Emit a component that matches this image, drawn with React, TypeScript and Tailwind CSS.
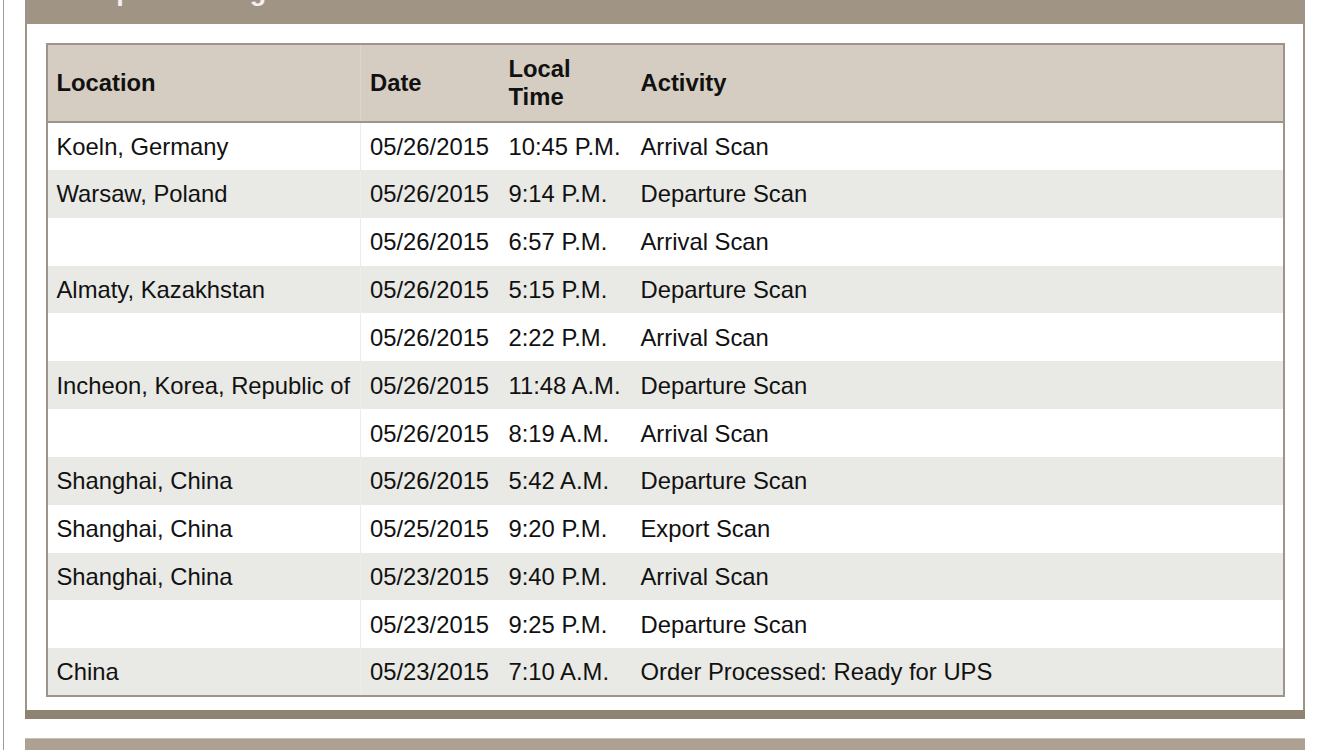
const rows: [string, string, string, string][] = [
  ['Koeln, Germany', '05/26/2015', '10:45 P.M.', 'Arrival Scan'],
  ['Warsaw, Poland', '05/26/2015', '9:14 P.M.', 'Departure Scan'],
  ['', '05/26/2015', '6:57 P.M.', 'Arrival Scan'],
  ['Almaty, Kazakhstan', '05/26/2015', '5:15 P.M.', 'Departure Scan'],
  ['', '05/26/2015', '2:22 P.M.', 'Arrival Scan'],
  ['Incheon, Korea, Republic of', '05/26/2015', '11:48 A.M.', 'Departure Scan'],
  ['', '05/26/2015', '8:19 A.M.', 'Arrival Scan'],
  ['Shanghai, China', '05/26/2015', '5:42 A.M.', 'Departure Scan'],
  ['Shanghai, China', '05/25/2015', '9:20 P.M.', 'Export Scan'],
  ['Shanghai, China', '05/23/2015', '9:40 P.M.', 'Arrival Scan'],
  ['', '05/23/2015', '9:25 P.M.', 'Departure Scan'],
  ['China', '05/23/2015', '7:10 A.M.', 'Order Processed: Ready for UPS'],
]

export default function App() {
  return (
    <div className="w-[1334px] h-[750px] overflow-hidden bg-white pl-[3px] font-['Liberation_Sans',Arial,sans-serif] text-[#111]">
      <div className="h-full border-l-[1.5px] border-[#a59b90] pl-[20.5px]">
        <div className="w-[1280px] border-x-2 border-[#9d9386]">
          <div className="h-[24px] bg-[#a09484] overflow-hidden pl-[22px]">
            <div className="-mt-[25px] flex items-center gap-[8px] text-[27px] font-bold text-[#f4f1ec] leading-[32px]">
              <span className="text-[18px]">▼</span>
              <span>Shipment Progress</span>
            </div>
          </div>
          <div className="bg-white pt-[19px] pb-[13px] pl-[19px] pr-[18px]">
            <table className="w-[1239px] table-fixed border-collapse border-2 border-[#9d958b] text-[23.8px]">
              <colgroup>
                <col className="w-[314px]" />
                <col className="w-[139px]" />
                <col className="w-[132px]" />
                <col />
              </colgroup>
              <thead>
                <tr className="h-[78px] bg-[#d5cdc1] border-b-2 border-[#9d958b] text-left font-bold leading-[28px]">
                  <th className="pl-[9px] border-r border-[#ddd6cc]">Location</th>
                  <th className="pl-[9px]">Date</th>
                  <th className="pl-[9px]">
                    Local
                    <br />
                    Time
                  </th>
                  <th className="pl-[9px]">Activity</th>
                </tr>
              </thead>
              <tbody>
                {rows.map((r, i) => (
                  <tr key={i} className={i % 2 === 0 ? 'h-[47.85px] bg-white' : 'h-[47.85px] bg-[#e9e9e5]'}>
                    <td className="pl-[9px] pt-[1px] border-r border-[#efece8] whitespace-nowrap">{r[0]}</td>
                    <td className="pl-[9px] pt-[1px] whitespace-nowrap">{r[1]}</td>
                    <td className="pl-[9px] pt-[1px] whitespace-nowrap">{r[2]}</td>
                    <td className="pl-[9px] pt-[1px] whitespace-nowrap">{r[3]}</td>
                  </tr>
                ))}
              </tbody>
            </table>
          </div>
          <div className="h-[9px] bg-[#8f8474] -mx-[2px]" />
        </div>
        <div className="h-[19px]" />
        <div className="w-[1280px] h-[20px] bg-[#ada292] border-t border-[#c8bfb3]" />
      </div>
    </div>
  )
}
